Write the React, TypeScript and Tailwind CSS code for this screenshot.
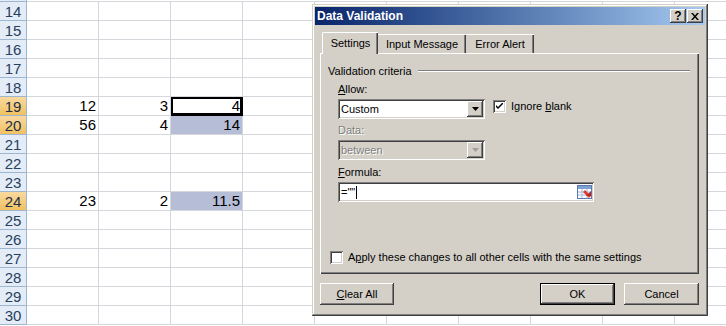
const rows = [
  { n: 14 },
  { n: 15 },
  { n: 16 },
  { n: 17 },
  { n: 18 },
  { n: 19, sel: true, a: '12', b: '3', c: '4', active: true },
  { n: 20, sel: true, a: '56', b: '4', c: '14', fill: true },
  { n: 21 },
  { n: 22 },
  { n: 23 },
  { n: 24, sel: true, a: '23', b: '2', c: '11.5', fill: true },
  { n: 25 },
  { n: 26 },
  { n: 27 },
  { n: 28 },
  { n: 29 },
  { n: 30 },
]

const extraCols = [0, 1, 2, 3, 4, 5, 6]

const raised =
  'shadow-[inset_-1px_-1px_#404040,inset_1px_1px_#ffffff,inset_-2px_-2px_#808080,inset_2px_2px_#d4d0c8]'
const sunken =
  'shadow-[inset_1px_1px_#808080,inset_-1px_-1px_#ffffff,inset_2px_2px_#404040,inset_-2px_-2px_#d4d0c8]'

function Sheet() {
  return (
    <div className="font-['Liberation_Sans',Arial,sans-serif] text-[15px] text-black">
      <div className="flex h-[2px]">
        <div className="w-[27px] shrink-0 border-r border-b border-[#9eb6ce] bg-[#e4ecf7]" />
        <div className="flex-1 border-b border-[#d4d7dc]" />
      </div>
      {rows.map((r) => (
        <div key={r.n} className="flex h-[19px]">
          <div
            className={`w-[27px] shrink-0 border-r border-b border-r-[#9eb6ce] border-b-[#9eb6ce] flex items-center justify-center leading-none ${
              r.sel
                ? 'bg-linear-to-b from-[#f9d99f] to-[#f1c15f] text-[#1e2f45]'
                : 'bg-[#e4ecf7] text-[#27415e]'
            }`}
          >
            {r.n}
          </div>
          <div className="w-[72px] shrink-0 border-r border-b border-[#d4d7dc] text-right pr-[2px] leading-[18px]">{r.a}</div>
          <div className="w-[72px] shrink-0 border-r border-b border-[#d4d7dc] text-right pr-[2px] leading-[18px]">{r.b}</div>
          <div
            className={`w-[72px] shrink-0 border-r border-b border-[#d4d7dc] text-right pr-[2px] leading-[18px] ${
              r.fill ? 'bg-[#b6bdd7]' : ''
            } ${r.active ? 'shadow-[inset_0_0_0_2px_#000] border-r-black border-b-black' : ''}`}
          >
            {r.c}
          </div>
          {extraCols.map((c) => (
            <div key={c} className="w-[72px] shrink-0 border-r border-b border-[#d4d7dc]" />
          ))}
        </div>
      ))}
    </div>
  )
}

function Arrow({ disabled }: { disabled?: boolean }) {
  return (
    <div className={`w-[16px] h-[16px] mt-[2px] mr-[2px] bg-[#d4d0c8] flex items-center justify-center ${raised}`}>
      <svg width="7" height="4" viewBox="0 0 7 4">
        <path d="M0 0h7L3.5 4z" fill={disabled ? '#a0a0a0' : '#000'} />
      </svg>
    </div>
  )
}

function Check({ checked }: { checked?: boolean }) {
  return (
    <div className={`w-[13px] h-[13px] bg-white shrink-0 flex items-center justify-center ${sunken}`}>
      {checked && (
        <svg width="7" height="7" viewBox="0 0 7 7">
          <path d="M0 2l2 2 5-5v2L2 6 0 4z" fill="#000" />
        </svg>
      )}
    </div>
  )
}

function RefIcon() {
  return (
    <svg width="16" height="16" viewBox="0 0 16 16">
      <rect x="0.5" y="1.5" width="14" height="13" fill="#fff" stroke="#5a7bb0" />
      <rect x="1" y="2" width="13" height="3" fill="#7d9fd4" />
      <path d="M1 8h13M1 11h13M5 5v9M10 5v9" stroke="#9fb6da" />
      <path d="M8 6l6 6-2 2-6-6z" fill="#e23a2e" />
      <path d="M9 12h5V7z" fill="#c2211a" />
    </svg>
  )
}

function Dialog() {
  return (
    <div
      className={`absolute left-[312px] top-[4px] w-[396px] h-[312px] p-[3px] bg-[#d4d0c8] font-['Liberation_Sans',Tahoma,sans-serif] text-[11px] text-black shadow-[inset_-1px_-1px_#404040,inset_1px_1px_#d4d0c8,inset_-2px_-2px_#808080,inset_2px_2px_#ffffff]`}
    >
      <div className="h-[18px] bg-linear-to-r from-[#0a246a] to-[#a6caf0] flex items-center justify-between pl-[2px] pr-[2px]">
        <span className="text-white font-bold text-[12px] leading-none">Data Validation</span>
        <div className="flex">
          <div className={`w-[16px] h-[14px] bg-[#d4d0c8] flex items-center justify-center font-bold text-[12px] leading-none ${raised}`}>?</div>
          <div className={`w-[16px] h-[14px] ml-[1px] bg-[#d4d0c8] flex items-center justify-center ${raised}`}>
            <svg width="8" height="7" viewBox="0 0 8 7">
              <path d="M0 0h2l2 2.5L6 0h2L5 3.5 8 7H6L4 4.5 2 7H0l3-3.5z" fill="#000" />
            </svg>
          </div>
        </div>
      </div>

      <div className="flex items-end ml-[7px] mt-[7px] h-[21px] relative z-10">
        <div className="h-[22px] w-[56px] mb-[-1px] bg-[#d4d0c8] border-t border-l border-white rounded-tl-[2px] shadow-[inset_-1px_0_#404040,inset_-2px_0_#808080] flex items-center justify-center">
          Settings
        </div>
        <div className="h-[19px] w-[88px] border-t border-white shadow-[inset_-1px_0_#404040,inset_-2px_0_#808080] flex items-center justify-center">
          Input Message
        </div>
        <div className="h-[19px] w-[68px] border-t border-white shadow-[inset_-1px_0_#404040,inset_-2px_0_#808080] flex items-center justify-center">
          Error Alert
        </div>
      </div>

      <div className="ml-[5px] w-[379px] h-[221px] border-t border-l border-white shadow-[inset_-1px_-1px_#404040,inset_-2px_-2px_#808080] pl-[7px] pt-[10px]">
        <div className="flex items-center h-[14px] pr-[9px]">
          <span className="whitespace-nowrap">Validation criteria</span>
          <div className="ml-[6px] flex-1 h-[2px] border-t border-[#808080] border-b border-b-white" />
        </div>
        <div className="ml-[10px] mt-[4px] leading-[14px]">
          <span className="underline">A</span>llow:
        </div>
        <div className="ml-[10px] mt-[3px] flex items-start">
          <div className={`w-[147px] h-[20px] bg-white flex justify-between ${sunken}`}>
            <span className="pl-[3px] leading-[20px]">Custom</span>
            <Arrow />
          </div>
          <div className="ml-[8px] flex items-center h-[13px] mt-[1px]">
            <Check checked />
            <span className="ml-[5px] whitespace-nowrap">
              Ignore <span className="underline">b</span>lank
            </span>
          </div>
        </div>
        <div className="ml-[10px] mt-[4px] leading-[14px] text-[#808080] [text-shadow:1px_1px_0_#fff]">Data:</div>
        <div className="ml-[10px] mt-[3px]">
          <div className={`w-[147px] h-[20px] bg-[#d4d0c8] flex justify-between ${sunken}`}>
            <span className="pl-[3px] leading-[20px] text-[#808080] [text-shadow:1px_1px_0_#fff]">between</span>
            <Arrow disabled />
          </div>
        </div>
        <div className="ml-[10px] mt-[5px] leading-[14px]">
          <span className="underline">F</span>ormula:
        </div>
        <div className="ml-[10px] mt-[3px]">
          <div className={`w-[256px] h-[20px] bg-white flex items-center justify-between ${sunken}`}>
            <span className="pl-[3px] leading-[16px] flex items-center">
              =""<span className="ml-[1px] w-[1px] h-[13px] bg-black" />
            </span>
            <span className="mr-[1px]">
              <RefIcon />
            </span>
          </div>
        </div>
        <div className="ml-[2px] mt-[47px] flex items-center">
          <Check />
          <span className="ml-[5px] whitespace-nowrap">
            A<span className="underline">p</span>ply these changes to all other cells with the same settings
          </span>
        </div>
      </div>

      <div className="flex mt-[9px] ml-[5px] h-[22px]">
        <div className={`w-[74px] h-[22px] flex items-center justify-center ${raised}`}>
          <span>
            <span className="underline">C</span>lear All
          </span>
        </div>
        <div className="w-[146px]" />
        <div className="w-[75px] h-[22px] flex items-center justify-center shadow-[inset_0_0_0_1px_#000,inset_-2px_-2px_#404040,inset_2px_2px_#ffffff,inset_-3px_-3px_#808080]">
          OK
        </div>
        <div className={`ml-[9px] w-[75px] h-[22px] flex items-center justify-center ${raised}`}>Cancel</div>
      </div>
    </div>
  )
}

export default function App() {
  return (
    <div className="relative w-[726px] h-[326px] overflow-hidden bg-white">
      <Sheet />
      <Dialog />
    </div>
  )
}
